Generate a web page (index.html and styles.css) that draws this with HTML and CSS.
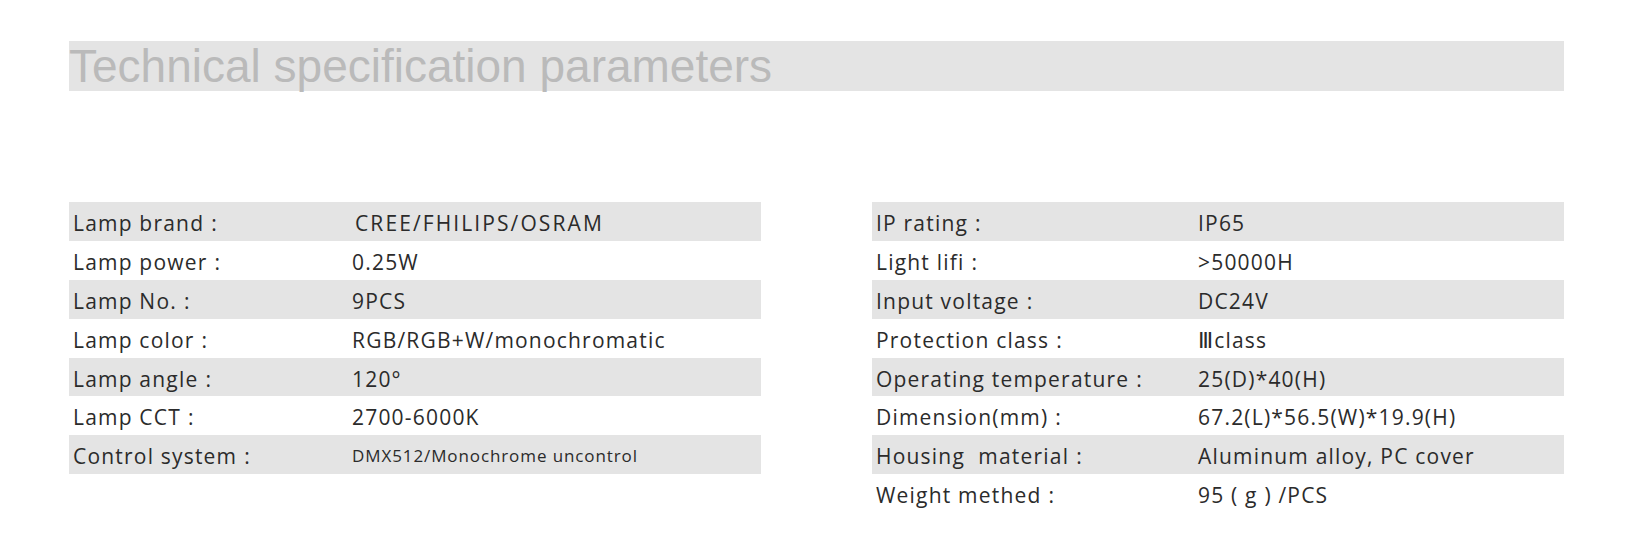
FILE: index.html
```html
<!DOCTYPE html>
<html lang="en">
<head>
<meta charset="utf-8">
<title>Technical specification parameters</title>
<link rel="stylesheet" href="styles.css">
</head>
<body>
<div class="page">
  <h1 class="section-title">Technical specification parameters</h1>
  <div class="spec-columns">
    <div class="spec-table spec-table--left">
      <div class="spec-row"><span class="spec-label">Lamp brand<span class="colon">:</span></span><span class="spec-value spec-value--indent">CREE/FHILIPS/OSRAM</span></div>
      <div class="spec-row"><span class="spec-label">Lamp power<span class="colon">:</span></span><span class="spec-value">0.25W</span></div>
      <div class="spec-row"><span class="spec-label">Lamp No.<span class="colon">:</span></span><span class="spec-value">9PCS</span></div>
      <div class="spec-row"><span class="spec-label">Lamp color<span class="colon">:</span></span><span class="spec-value">RGB/RGB+W/monochromatic</span></div>
      <div class="spec-row"><span class="spec-label">Lamp angle<span class="colon">:</span></span><span class="spec-value">120°</span></div>
      <div class="spec-row"><span class="spec-label">Lamp CCT<span class="colon">:</span></span><span class="spec-value">2700-6000K</span></div>
      <div class="spec-row"><span class="spec-label">Control system<span class="colon">:</span></span><span class="spec-value spec-value--small">DMX512/Monochrome uncontrol</span></div>
    </div>
    <div class="spec-table spec-table--right">
      <div class="spec-row"><span class="spec-label">IP rating<span class="colon">:</span></span><span class="spec-value">IP65</span></div>
      <div class="spec-row"><span class="spec-label">Light lifi<span class="colon">:</span></span><span class="spec-value">&gt;50000H</span></div>
      <div class="spec-row"><span class="spec-label">Input voltage<span class="colon">:</span></span><span class="spec-value">DC24V</span></div>
      <div class="spec-row"><span class="spec-label">Protection class<span class="colon">:</span></span><span class="spec-value"><span class="roman">Ⅲ</span>class</span></div>
      <div class="spec-row"><span class="spec-label">Operating temperature<span class="colon">:</span></span><span class="spec-value">25(D)*40(H)</span></div>
      <div class="spec-row"><span class="spec-label">Dimension(mm)<span class="colon">:</span></span><span class="spec-value">67.2(L)*56.5(W)*19.9(H)</span></div>
      <div class="spec-row"><span class="spec-label">Housing&nbsp; material<span class="colon">:</span></span><span class="spec-value">Aluminum alloy, PC cover</span></div>
      <div class="spec-row"><span class="spec-label">Weight methed<span class="colon">:</span></span><span class="spec-value">95 ( g ) /PCS</span></div>
    </div>
  </div>
</div>
</body>
</html>
```
FILE: styles.css
```css
html, body {
  margin: 0;
  padding: 0;
  background: #ffffff;
}

.page {
  padding: 41px 74px 0 69px;
  width: 1495px;
}

.section-title {
  margin: 0;
  height: 50px;
  background: #e4e4e4;
  color: #bababa;
  font-family: "Liberation Sans", Arial, sans-serif;
  font-weight: normal;
  font-size: 46px;
  line-height: 50px;
  white-space: nowrap;
}

.spec-columns {
  display: grid;
  grid-template-columns: 692px 692px;
  column-gap: 111px;
  margin-top: 111px;
  align-items: start;
}

.spec-table {
  display: flex;
  flex-direction: column;
}

.spec-row {
  box-sizing: border-box;
  display: grid;
  align-items: start;
  height: 38.9px;
  padding: 4px 0 0 4px;
  overflow: hidden;
  font-family: "Open Sans", sans-serif;
  font-size: 21px;
  line-height: 34.9px;
  letter-spacing: 1.2px;
  color: #2b2b2b;
  white-space: nowrap;
}

.spec-row:nth-child(odd) {
  background: #e4e4e4;
}

.spec-table--left .spec-row {
  grid-template-columns: 279px 1fr;
}

.spec-table--right .spec-row {
  grid-template-columns: 322px 1fr;
}

.colon {
  margin-left: 7px;
}

.spec-value--indent {
  padding-left: 3px;
  letter-spacing: 2.1px;
}

.spec-value--small {
  font-size: 17px;
  line-height: 33px;
  letter-spacing: 0.9px;
}

.roman {
  font-family: "DejaVu Sans", sans-serif;
  font-size: 22px;
  line-height: 0;
  letter-spacing: 1px;
}
```
